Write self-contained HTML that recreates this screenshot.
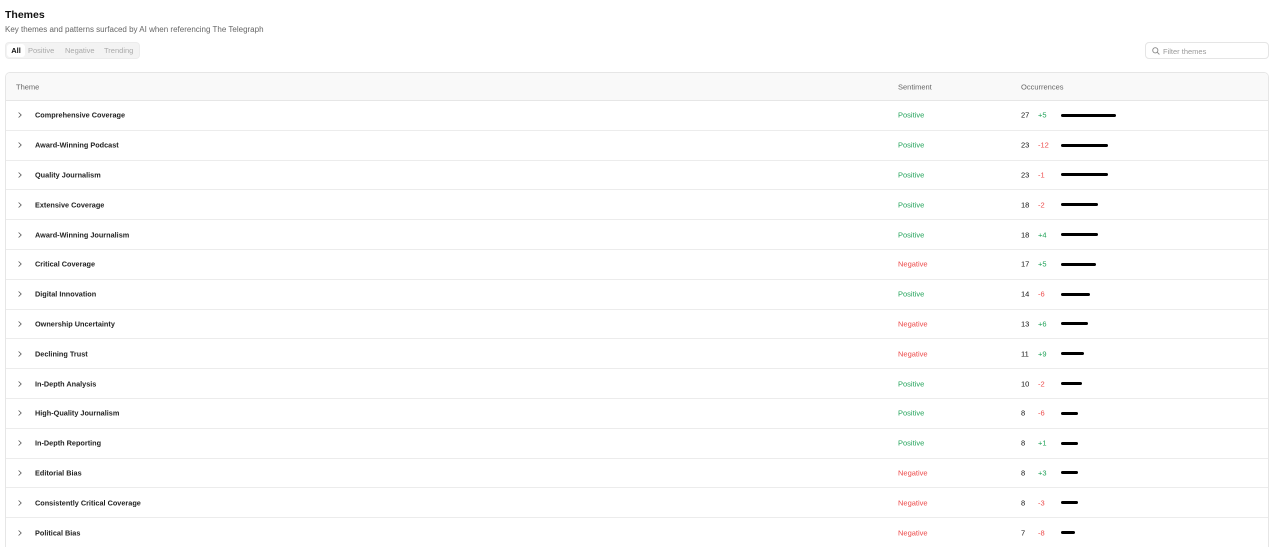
<!DOCTYPE html>
<html><head><meta charset="utf-8">
<style>
*{box-sizing:border-box;margin:0;padding:0}
body{width:1272px;height:547px;background:#fff;font-family:"Liberation Sans",sans-serif;color:#111;position:relative;overflow:hidden}
.t{position:absolute;left:5px;top:9px;font-size:10.5px;font-weight:bold}
.s{position:absolute;left:5px;top:25px;font-size:8px;color:#666}
.tabs{position:absolute;left:5px;top:42px;width:135px;height:17px;background:#f3f3f3;border-radius:4px;border:1px solid #ececec;font-size:7.5px;color:#aaa}
.tabs span{position:absolute;top:3px}
.tabs .a{left:1px;top:1px;width:18px;height:13px;background:#fff;border-radius:3px;color:#111;font-weight:bold;text-align:center;line-height:13px}
.f{position:absolute;left:1145px;top:42px;width:124px;height:17px;border:1px solid #e5e5e5;border-radius:4px;font-size:7.5px;color:#999}
.f span{position:absolute;left:17px;top:3.5px}
.tbl{position:absolute;left:5px;top:72px;width:1264px;height:475px;border:1px solid #e6e6e6;border-bottom:none;border-radius:5px 5px 0 0;overflow:hidden}
.h{height:28px;background:#f9f9f9;border-bottom:1px solid #e6e6e6;position:relative;font-size:7.5px;color:#666}
.r{height:29.8px;border-bottom:1px solid #ececec;position:relative;font-size:7.5px}
.h span,.r span{position:absolute;top:50%;transform:translateY(-50%)}
.c1{left:29px}.c2{left:892px}.c3{left:1015px}
.r .c1{font-weight:bold;color:#222;font-size:7.3px}
.ch{position:absolute;left:12px;top:50%;margin-top:-3px}
.n{left:1015px}.d{left:1032px}
.b{position:absolute;left:1055px;top:50%;height:3px;margin-top:-1.5px;background:#000;border-radius:2px}
.p{color:#22a35a}.g{color:#ec4b4b}
</style></head><body>
<div class="t">Themes</div>
<div class="s">Key themes and patterns surfaced by AI when referencing The Telegraph</div>
<div class="tabs"><span class="a">All</span><span style="left:22px">Positive</span><span style="left:59px">Negative</span><span style="left:98px">Trending</span></div>
<div class="f"><svg style="position:absolute;left:6px;top:4px" width="8" height="8" viewBox="0 0 8 8"><circle cx="3.3" cy="3.3" r="2.6" fill="none" stroke="#888" stroke-width="0.9"/><path d="M5.2 5.2L7.4 7.4" stroke="#888" stroke-width="0.9"/></svg><span>Filter themes</span></div>
<div class="tbl">
<div class="h"><span class="c1" style="left:10px">Theme</span><span class="c2">Sentiment</span><span class="c3">Occurrences</span></div>
<div class="r"><svg class="ch" width="4" height="6" viewBox="0 0 4 6"><path d="M0.6 0.5L3.2 3L0.6 5.5" fill="none" stroke="#555" stroke-width="0.8"/></svg><span class="c1">Comprehensive Coverage</span><span class="c2 p">Positive</span><span class="n">27</span><span class="d p">+5</span><i class="b" style="width:55px"></i></div>
<div class="r"><svg class="ch" width="4" height="6" viewBox="0 0 4 6"><path d="M0.6 0.5L3.2 3L0.6 5.5" fill="none" stroke="#555" stroke-width="0.8"/></svg><span class="c1">Award-Winning Podcast</span><span class="c2 p">Positive</span><span class="n">23</span><span class="d g">-12</span><i class="b" style="width:47px"></i></div>
<div class="r"><svg class="ch" width="4" height="6" viewBox="0 0 4 6"><path d="M0.6 0.5L3.2 3L0.6 5.5" fill="none" stroke="#555" stroke-width="0.8"/></svg><span class="c1">Quality Journalism</span><span class="c2 p">Positive</span><span class="n">23</span><span class="d g">-1</span><i class="b" style="width:47px"></i></div>
<div class="r"><svg class="ch" width="4" height="6" viewBox="0 0 4 6"><path d="M0.6 0.5L3.2 3L0.6 5.5" fill="none" stroke="#555" stroke-width="0.8"/></svg><span class="c1">Extensive Coverage</span><span class="c2 p">Positive</span><span class="n">18</span><span class="d g">-2</span><i class="b" style="width:37px"></i></div>
<div class="r"><svg class="ch" width="4" height="6" viewBox="0 0 4 6"><path d="M0.6 0.5L3.2 3L0.6 5.5" fill="none" stroke="#555" stroke-width="0.8"/></svg><span class="c1">Award-Winning Journalism</span><span class="c2 p">Positive</span><span class="n">18</span><span class="d p">+4</span><i class="b" style="width:37px"></i></div>
<div class="r"><svg class="ch" width="4" height="6" viewBox="0 0 4 6"><path d="M0.6 0.5L3.2 3L0.6 5.5" fill="none" stroke="#555" stroke-width="0.8"/></svg><span class="c1">Critical Coverage</span><span class="c2 g">Negative</span><span class="n">17</span><span class="d p">+5</span><i class="b" style="width:35px"></i></div>
<div class="r"><svg class="ch" width="4" height="6" viewBox="0 0 4 6"><path d="M0.6 0.5L3.2 3L0.6 5.5" fill="none" stroke="#555" stroke-width="0.8"/></svg><span class="c1">Digital Innovation</span><span class="c2 p">Positive</span><span class="n">14</span><span class="d g">-6</span><i class="b" style="width:29px"></i></div>
<div class="r"><svg class="ch" width="4" height="6" viewBox="0 0 4 6"><path d="M0.6 0.5L3.2 3L0.6 5.5" fill="none" stroke="#555" stroke-width="0.8"/></svg><span class="c1">Ownership Uncertainty</span><span class="c2 g">Negative</span><span class="n">13</span><span class="d p">+6</span><i class="b" style="width:27px"></i></div>
<div class="r"><svg class="ch" width="4" height="6" viewBox="0 0 4 6"><path d="M0.6 0.5L3.2 3L0.6 5.5" fill="none" stroke="#555" stroke-width="0.8"/></svg><span class="c1">Declining Trust</span><span class="c2 g">Negative</span><span class="n">11</span><span class="d p">+9</span><i class="b" style="width:23px"></i></div>
<div class="r"><svg class="ch" width="4" height="6" viewBox="0 0 4 6"><path d="M0.6 0.5L3.2 3L0.6 5.5" fill="none" stroke="#555" stroke-width="0.8"/></svg><span class="c1">In-Depth Analysis</span><span class="c2 p">Positive</span><span class="n">10</span><span class="d g">-2</span><i class="b" style="width:21px"></i></div>
<div class="r"><svg class="ch" width="4" height="6" viewBox="0 0 4 6"><path d="M0.6 0.5L3.2 3L0.6 5.5" fill="none" stroke="#555" stroke-width="0.8"/></svg><span class="c1">High-Quality Journalism</span><span class="c2 p">Positive</span><span class="n">8</span><span class="d g">-6</span><i class="b" style="width:17px"></i></div>
<div class="r"><svg class="ch" width="4" height="6" viewBox="0 0 4 6"><path d="M0.6 0.5L3.2 3L0.6 5.5" fill="none" stroke="#555" stroke-width="0.8"/></svg><span class="c1">In-Depth Reporting</span><span class="c2 p">Positive</span><span class="n">8</span><span class="d p">+1</span><i class="b" style="width:17px"></i></div>
<div class="r"><svg class="ch" width="4" height="6" viewBox="0 0 4 6"><path d="M0.6 0.5L3.2 3L0.6 5.5" fill="none" stroke="#555" stroke-width="0.8"/></svg><span class="c1">Editorial Bias</span><span class="c2 g">Negative</span><span class="n">8</span><span class="d p">+3</span><i class="b" style="width:17px"></i></div>
<div class="r"><svg class="ch" width="4" height="6" viewBox="0 0 4 6"><path d="M0.6 0.5L3.2 3L0.6 5.5" fill="none" stroke="#555" stroke-width="0.8"/></svg><span class="c1">Consistently Critical Coverage</span><span class="c2 g">Negative</span><span class="n">8</span><span class="d g">-3</span><i class="b" style="width:17px"></i></div>
<div class="r"><svg class="ch" width="4" height="6" viewBox="0 0 4 6"><path d="M0.6 0.5L3.2 3L0.6 5.5" fill="none" stroke="#555" stroke-width="0.8"/></svg><span class="c1">Political Bias</span><span class="c2 g">Negative</span><span class="n">7</span><span class="d g">-8</span><i class="b" style="width:14px"></i></div>
</div>
</body></html>
